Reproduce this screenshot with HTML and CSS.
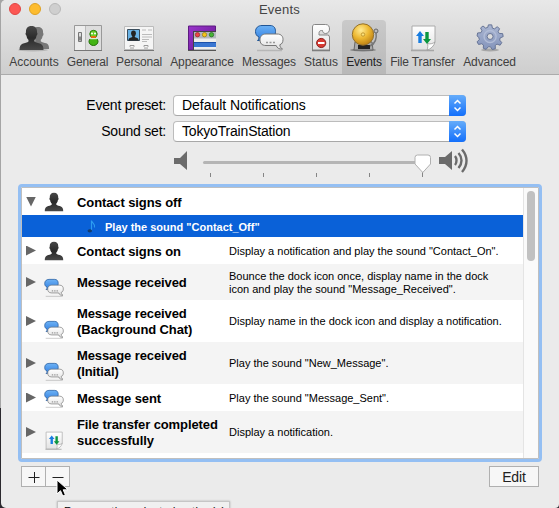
FILE: index.html
```html
<!DOCTYPE html>
<html lang="en">
<head>
<meta charset="utf-8">
<title>Events</title>
<link rel="stylesheet" href="styles.css">
</head>
<body>
<svg class="defs" aria-hidden="true">
  <defs>
    <linearGradient id="dark" x1="0" y1="0" x2="0" y2="1"><stop offset="0" stop-color="#484848"/><stop offset=".5" stop-color="#2a2a2a"/><stop offset="1" stop-color="#484848"/></linearGradient>
    <linearGradient id="paper" x1="0" y1="0" x2="0" y2="1"><stop offset="0" stop-color="#fff"/><stop offset="1" stop-color="#e2e2e2"/></linearGradient>
    <linearGradient id="bluebubble" x1="0" y1="0" x2="0" y2="1"><stop offset="0" stop-color="#6db2f5"/><stop offset="1" stop-color="#2f7de0"/></linearGradient>
    <linearGradient id="purple" x1="0" y1="0" x2="1" y2="1"><stop offset="0" stop-color="#9a35cc"/><stop offset=".6" stop-color="#7a22a8"/><stop offset="1" stop-color="#3b0c58"/></linearGradient>
    <linearGradient id="gear" x1="0" y1="0" x2="0" y2="1"><stop offset="0" stop-color="#aab6d2"/><stop offset="1" stop-color="#8494bb"/></linearGradient>
    <radialGradient id="gold" cx=".4" cy=".3" r=".75"><stop offset="0" stop-color="#ffeb94"/><stop offset=".5" stop-color="#edb832"/><stop offset="1" stop-color="#b87b10"/></radialGradient>
    <symbol id="person" viewBox="0 0 26 26">
      <path d="M13 1C9 1 7.200 3.600 7.500 7.500c-.8.3-.5 2.700.5 3.300.2 2.200 1.300 3.500 2 4.200v1.500c-1 1.300-4 1.500-6 2.300C1.800 19.800 1 21.500 1 25h24c0-3.500-.8-5.200-3-6.200-2-.8-5-1-6-2.300v-1.500c.7-.7 1.800-2 2-4.200 1-.6 1.300-3 .5-3.300C18.800 3.600 17 1 13 1z"/>
    </symbol>
    <g id="bubbleart">
      <path d="M4 28.500h25" stroke="#888" stroke-width="1.500" opacity=".4"/>
      <path d="M9 3.500h8c4 0 5.500 2.500 5.500 6s-1.500 6.500-5.500 6.500H9.500C9 17.500 7 19 4.500 18.500 5.500 17.800 6 16.500 6 15 3.500 14 2.500 12 2.500 9.500c0-3.500 2.500-6 6.500-6z" fill="url(#bluebubble)" stroke="#205595"/>
      <path d="M13 12h11c4.500 0 6 2.500 6 5.500 0 2.800-1 4.500-3.200 5.300.2 2 1 3.300 2.700 4.200-3.500.4-5.500-1-6.300-3.500H13c-4.500 0-6-2.500-6-5.700C7 14.500 9 12 13 12z" fill="url(#paper)" stroke="#777"/>
      <path d="M13 20.500h2m1.500 0h2m1.500 0h2" stroke="#999" stroke-width="1.700"/>
    </g>
    <symbol id="bubbles" viewBox="0 0 32 32"><use href="#bubbleart"/></symbol>
    <symbol id="bubbles-small" viewBox="1.500 0 29.500 29.500"><use href="#bubbleart"/></symbol>
    <g id="transferart">
      <path d="M4 28.500h23" stroke="#777" stroke-width="1.500" opacity=".5"/>
      <path d="M5 4h23v16l-8 8H5z" fill="url(#paper)" stroke="#aaa"/>
      <path d="M20 28c1-2.500 1-4.500.5-6.500 2.500.8 5 .3 7.500-1.500-1 4-4 7-8 8z" fill="#fff" stroke="#999" stroke-width=".8"/>
      <path d="M13 9l4 5h-2.300v7h-3.400v-7H9z" fill="#187de0"/>
      <path d="M20 22l4-5h-2.300v-7h-3.400v7H16z" fill="#0c9640"/>
    </g>
    <symbol id="transfer" viewBox="0 0 32 32"><use href="#transferart"/></symbol>
    <symbol id="transfer-small" viewBox="2 1 28.500 28.500"><use href="#transferart"/></symbol>
  </defs>
</svg>
<div class="window">
  <header class="chrome">
    <div class="titlebar">
      <div class="lights"><i class="close"></i><i class="min"></i><i class="max"></i></div>
      <h1>Events</h1>
    </div>
    <nav class="toolbar">
      <a class="accounts"><svg viewBox="0 0 32 32"><ellipse cx="15" cy="28" rx="15" ry="1.500" fill="#777" opacity=".35"/><g fill="#777"><use href="#person" x="8" y="3.500" width="24" height="25"/></g><g fill="url(#dark)"><use href="#person" x="0" y="3" width="27" height="26"/></g></svg><span>Accounts</span></a>
      <a class="general"><svg viewBox="0 0 32 32"><path d="M2.500 3.500h27v25h-27z" fill="#ddd" stroke="#999"/><path d="M3 4h10v24H3z" fill="#ededed"/><path d="M13.500 4v24" stroke="#bbb"/><path d="M6.500 10.500h3v9h-3z" fill="#ddd" stroke="#777"/><path d="M7 14.500h2v4H7z" fill="#888"/><path d="M2 28.500h28" stroke="#777"/><ellipse cx="21.500" cy="19.500" rx="4.500" ry="4" fill="#43b413" stroke="#247009"/><circle cx="21.500" cy="12" r="3.700" fill="#69cf24" stroke="#27780c"/><circle cx="20" cy="11.500" r="1" fill="#fff"/><circle cx="23" cy="11.500" r="1" fill="#fff"/><path d="M18.500 14h6l-1 2h-4z" fill="#e66a12"/><path d="M18 16.700h7" stroke="#fff"/></svg><span>General</span></a>
      <a class="personal"><svg viewBox="0 0 32 32"><path d="M1.500 4.500h29v23h-29z" fill="#f5f5f5" stroke="#bbb"/><path d="M1 28.500h30" stroke="#777"/><path d="M4.500 7.500h12v11h-12z" fill="#6ab3e6" stroke="#3a4d5c"/><g fill="#222"><use href="#person" x="5" y="8" width="11" height="11"/></g><path d="M19 8h4m2 0h4M19 12.500h10M19 15h10M19 17.500h7M19 19.500h5" stroke="#bbb"/><path d="M8 27v-1.500l-1-1V23.500h4v1l-1 1V27m12 0v-1.500l-1-1V23.500h4v1l-1 1V27" fill="none" stroke="#999"/></svg><span>Personal</span></a>
      <a class="appearance"><svg viewBox="0 0 32 32"><path d="M2.500 4h27v24h-27z" fill="url(#purple)" stroke="#5d1b80"/><path d="M7 9h23v19H7z" fill="#b4b8bd"/><path d="M7 9.500h23M7.500 9v19" stroke="#444"/><circle cx="11.500" cy="12.700" r="2.200" fill="#e44" stroke="#8d2929" stroke-width=".7"/><circle cx="18.500" cy="12.700" r="2.200" fill="#f6c51a" stroke="#93750d" stroke-width=".7"/><circle cx="25.500" cy="12.700" r="2.200" fill="#46b336" stroke="#246c1d" stroke-width=".7"/><path d="M8 16.500h22V20H8z" fill="#eee"/><path d="M8 20h22v5H8z" fill="#3976d2"/><path d="M8 20.500h22" stroke="#1c51aa"/><path d="M8 26h22" stroke="#eee" stroke-width="2"/><path d="M2 28.500h28" stroke="#555"/></svg><span>Appearance</span></a>
      <a class="messages"><svg><use href="#bubbles"/></svg><span>Messages</span></a>
      <a class="status"><svg viewBox="0 0 32 32"><path d="M7 28.500h18" stroke="#777" stroke-width="1.500"/><path d="M9.500 2.500h11c3 0 4 2 4 4.500 0 2.700-1.500 4.500-4 4.500-2 0-3-1.500-3-3h-1c-2 0-2.500 1.300-2.500 3v1.500h8.500q2 0 2 2V28h-17V5c0-1.500.7-2.500 2-2.500z" fill="url(#paper)" stroke="#858585"/><circle cx="16.200" cy="21" r="4.600" fill="#d83a32" stroke="#8d2320"/><path d="M13 21h6.500" stroke="#fff" stroke-width="2"/></svg><span>Status</span></a>
      <a class="events"><svg viewBox="0 0 32 32"><ellipse cx="15" cy="28" rx="13" ry="1.500" fill="#444" opacity=".5"/><path d="M7 20h17l1 8H6z" fill="#aaa" stroke="#666"/><path d="M10 23h12v4H10z" fill="#222"/><path d="M28 10c1 7-1 12-6 14" fill="none" stroke="#777" stroke-width="1.500"/><circle cx="28" cy="9" r="2" fill="#bbb" stroke="#666"/><circle cx="15" cy="12.500" r="10.700" fill="url(#gold)" stroke="#94722d"/><circle cx="15" cy="12.500" r="1.700" fill="#fae27c" stroke="#ad811d" stroke-width=".7"/></svg><span>Events</span></a>
      <a class="filetransfer"><svg><use href="#transfer"/></svg><span>File Transfer</span></a>
      <a class="advanced"><svg viewBox="0 0 32 32"><ellipse cx="16" cy="28" rx="9" ry="1.500" fill="#777" opacity=".5"/><g stroke="#616f91" fill="url(#gear)" transform="translate(1.200 1) scale(.93)"><path d="M14.200 2.500h3.600l.7 3.500 2.300.8 2.800-2.300 2.600 2.100-1.500 3.200 1.200 2 3.600.1.600 3.200-3.300 1.500-.5 2.300 2.300 2.700-1.800 2.800-3.400-1.200-1.900 1.500.2 3.400-3.300 1-2-3h-2.400l-2.300 2.800-3-1.200.2-3.400-1.800-1.500-3.500.8-1.600-2.800 2.400-2.500-.5-2.300L2 14.400l.6-3.200 3.600-.3 1.100-2-1.500-3.100 2.600-2.100L11.200 6l2.300-.8z" transform="translate(0 -.5)"/><circle cx="16" cy="14.500" r="6.500" fill="none" stroke="#b2bdd7" stroke-width="1.500"/><circle cx="16" cy="14.500" r="3.200" fill="#dcdcdc"/></g></svg><span>Advanced</span></a>
    </nav>
  </header>

  <main>
    <section class="form">
      <label>Event preset:</label>
      <div class="select"><span class="preset">Default Notifications</span><b><svg viewBox="0 0 17 21"><path d="M5.500 8.500l3-3 3 3M5.500 12.500l3 3 3-3"/></svg></b></div>
      <label>Sound set:</label>
      <div class="select"><span class="sound">TokyoTrainStation</span><b><svg viewBox="0 0 17 21"><path d="M5.500 8.500l3-3 3 3M5.500 12.500l3 3 3-3"/></svg></b></div>
    </section>
    <svg class="volume" viewBox="0 0 300 30">
      <path d="M1 10h6l7-7v19l-7-6H1z" fill="#6b6b6b"/>
      <rect x="30" y="13" width="216" height="3" rx="1.500" fill="#b5b5b5"/>
      <path d="M37.500 25v4M90.500 25v4M143.500 25v4M196.500 25v4M249.500 22v7" stroke="#858585"/>
      <path d="M244.500 7h10.500q2.500 0 2.500 2.500v6.500l-7.750 8.500-7.750-8.500v-6.500q0-2.500 2.500-2.500z" fill="#fff" stroke="#b0b0b0"/>
      <path d="M266 9h6l7-6v19l-7-6h-6z" fill="#6b6b6b"/>
      <path d="M282 8c2 2.500 2 6.500 0 9M285.500 5c4 4.500 4 10.500 0 15M289 1.500c6 7 6 15.500 0 22.500" fill="none" stroke="#6b6b6b" stroke-width="2.400"/>
    </svg>

    <section class="list">
      <div class="rows">
        <div class="row h27"><i class="tri down"></i><svg class="ico"><use href="#person" fill="url(#dark)"/></svg><strong>Contact signs off</strong></div>
        <div class="row selected"><svg class="note" viewBox="0 0 14 16"><path d="M7.500 13V2.500c.5 3 4 3 3 7" fill="none" stroke="#2c9cf0" stroke-width="1.200"/><ellipse cx="5.800" cy="12.800" rx="2.300" ry="1.600" fill="#123c70"/></svg><span>Play the sound "Contact_Off"</span></div>
        <div class="row h27"><i class="tri"></i><svg class="ico"><use href="#person" fill="url(#dark)"/></svg><strong>Contact signs on</strong><p>Display a notification and play the sound "Contact_On".</p></div>
        <div class="row h36 alt"><i class="tri"></i><svg class="ico"><use href="#bubbles-small"/></svg><strong>Message received</strong><p>Bounce the dock icon once, display name in the dock<br>icon and play the sound "Message_Received".</p></div>
        <div class="row h42"><i class="tri"></i><svg class="ico"><use href="#bubbles-small"/></svg><strong>Message received<br>(Background Chat)</strong><p>Display name in the dock icon and display a notification.</p></div>
        <div class="row h42 alt"><i class="tri"></i><svg class="ico"><use href="#bubbles-small"/></svg><strong>Message received<br>(Initial)</strong><p>Play the sound "New_Message".</p></div>
        <div class="row h27"><i class="tri"></i><svg class="ico"><use href="#bubbles-small"/></svg><strong>Message sent</strong><p>Play the sound "Message_Sent".</p></div>
        <div class="row h42 alt"><i class="tri"></i><svg class="ico"><use href="#transfer-small"/></svg><strong>File transfer completed<br>successfully</strong><p>Display a notification.</p></div>
      </div>
      <div class="scrollbar"><i></i></div>
    </section>

    <footer>
      <div class="segments">
        <button aria-label="Add"><svg viewBox="0 0 12 12"><path d="M.5 6.500h11M6.500 1v11"/></svg></button>
        <button aria-label="Remove"><svg viewBox="0 0 12 12"><path d="M.5 6.500h11"/></svg></button>
      </div>
      <button class="edit">Edit</button>
    </footer>
  </main>
  <div class="tooltip">Remove the selected action(s)</div>
  <svg class="cursor" viewBox="0 0 14 19"><path d="M1 1v14l3.500-3.300 2.300 5.300 2.600-1.100L7.200 10.800H12z" fill="#000" stroke="#fff"/></svg>
</div>
</body>
</html>
```
FILE: styles.css
```css
* { box-sizing: border-box; }
body {
  margin: 0;
  width: 559px;
  height: 508px;
  overflow: hidden;
  background: linear-gradient(#a5a5a5 408px, #2b292e 408px);
  font-family: "Liberation Sans", Arial, sans-serif;
  color: #000;
}
.defs { position: absolute; width: 0; height: 0; }
.window {
  position: relative;
  height: 508px;
  margin-left: 1px;
  background: #ebebeb;
  border-radius: 5px 0 4px 5px;
  overflow: hidden;
}
.chrome {
  height: 75px;
  background: linear-gradient(#e8e8e8, #cecece);
  border-bottom: 1px solid #ababab;
}
.titlebar { display: flex; height: 20px; padding: 3px 0 0 8px; }
.lights { display: flex; gap: 8px; width: 240px; }
.lights i { width: 12px; height: 12px; border-radius: 50%; border: 1px solid; }
.close { background: #fc5753; border-color: #df4744 !important; }
.min { background: #fdbc2e; border-color: #dea123 !important; }
.max { background: #cfcfcf; border-color: #b8b8b8 !important; }
h1 {
  margin: -1px 0 0 10px;
  font-size: 13px;
  line-height: 15px;
  font-weight: normal;
  letter-spacing: .2px;
  color: #444;
}
.toolbar { display: flex; height: 54px; padding-left: 4px; }
.toolbar a {
  display: flex;
  flex-direction: column;
  align-items: center;
  padding-top: 2px;
  font-size: 12px;
  line-height: 14px;
  color: #404040;
  white-space: nowrap;
}
.toolbar svg { width: 32px; height: 32px; flex: none; margin-bottom: 1px; }
.accounts { width: 58px; }
.general { width: 49px; letter-spacing: -.2px; }
.personal { width: 54px; letter-spacing: -.2px; }
.appearance { width: 72px; letter-spacing: -.12px; }
.messages { width: 62px; letter-spacing: -.1px; }
.status { width: 42px; }
.events { width: 44px; background: rgba(0,0,0,.1); border-radius: 4px 4px 0 0; }
.toolbar .events { color: #222; letter-spacing: -.2px; }
.filetransfer { width: 73px; letter-spacing: -.15px; }
.advanced { width: 61px; letter-spacing: -.1px; }

main { padding: 20px 17px 0 17px; }
.form {
  display: grid;
  grid-template-columns: 148px 293px;
  column-gap: 7px;
  row-gap: 5px;
  height: 47px;
}
.form label {
  font-size: 14px;
  line-height: 20px;
  text-align: right;
  letter-spacing: -.22px;
}
.select {
  display: flex;
  height: 21px;
  background: #fff;
  border: 1px solid #bcbcbc;
  border-bottom-color: #a8a8a8;
  border-radius: 4px;
  padding-left: 8px;
  font-size: 14px;
  line-height: 19px;
}
.select span { flex: 1; }
.preset { letter-spacing: -.04px; }
.sound { letter-spacing: -.18px; }
.select b {
  width: 17px;
  height: 21px;
  margin: -1px;
  border-radius: 0 4px 4px 0;
  background: linear-gradient(#65acfa, #136ffb);
}
.select svg { display: block; width: 17px; height: 21px; fill: none; stroke: #fff; stroke-width: 1.5; }
.volume { display: block; width: 300px; height: 30px; margin: 6px 0 0 155px; }

.list {
  display: flex;
  width: 524px;
  height: 278px;
  margin-top: 6px;
  border: 3px solid #94bff3;
  border-radius: 4px;
  background: #fff;
  box-shadow: inset 0 0 0 1px #bfbfbf;
  padding: 1px;
}
.rows { flex: 1; }
.row { display: flex; align-items: center; padding-left: 4px; }
.h27 { height: 27px; }
.h36 { height: 36px; }
.h42 { height: 42px; }
.alt { background: #f4f4f4; }
.selected { height: 22px; padding-left: 62px; background: #0a61d8; color: #fff; }
.selected span { margin-left: 7px; padding-top: 2px; font-size: 11px; font-weight: bold; }
.note { width: 14px; height: 16px; }
.tri { width: 10px; height: 10px; background: #666; clip-path: polygon(0 0, 100% 50%, 0 100%); }
.tri.down { clip-path: polygon(0 0, 100% 0, 50% 100%); }
.ico { width: 20px; height: 20px; margin: 0 13px 3px 8px; align-self: flex-end; }
.row strong { width: 152px; padding-top: 2px; font-size: 13px; line-height: 16px; letter-spacing: -.1px; white-space: nowrap; }
.row p { margin: 0; padding-top: 1px; font-size: 11px; line-height: 13px; white-space: nowrap; }
.scrollbar { width: 15px; border-left: 1px solid #e4e4e4; background: #fafafa; padding: 3px 0 0 3px; }
.scrollbar i { display: block; width: 8px; height: 70px; border-radius: 4px; background: #c1c1c1; }

footer { display: flex; justify-content: space-between; padding: 4px 3px 0 3px; }
.segments { display: flex; }
button {
  display: flex;
  align-items: center;
  justify-content: center;
  width: 25px;
  height: 21px;
  padding: 0;
  border: 1px solid #b0b0b0;
  background: #f7f7f7;
  font: 14px "Liberation Sans", Arial, sans-serif;
  color: #222;
}
button + button { margin-left: -1px; }
button svg { width: 12px; height: 12px; stroke: #222; fill: none; }
.edit { width: 50px; letter-spacing: -.1px; }
.tooltip {
  position: absolute;
  left: 56px;
  top: 501px;
  width: 173px;
  height: 20px;
  padding: 3px 0 0 6px;
  background: #f0f0f0;
  border: 1px solid #c6c6c6;
  box-shadow: 0 0 2px rgba(0,0,0,.25);
  font-size: 11px;
  line-height: 13px;
  letter-spacing: .45px;
  white-space: nowrap;
}
.cursor { position: absolute; left: 55px; top: 479px; width: 14px; height: 19px; }
```
